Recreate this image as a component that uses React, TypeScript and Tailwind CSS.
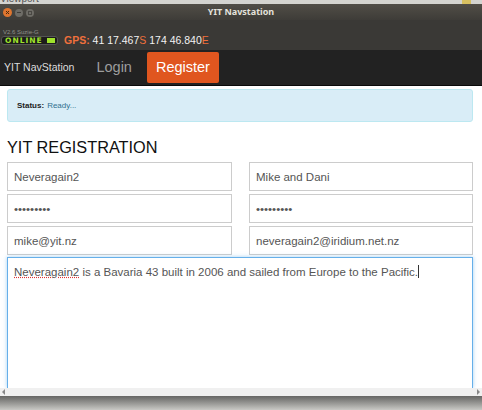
const field = "w-full h-full border border-[#ccc] bg-white px-[6px] text-[11.5px] text-[#555] outline-none font-['Liberation_Sans',sans-serif]";

function Field({ value, type = "text" }: { value: string; type?: string }) {
  return (
    <div className="h-[29px]">
      <input className={field} type={type} value={value} readOnly />
    </div>
  );
}

export default function App() {
  return (
    <div className="w-[482px] h-[410px] overflow-hidden flex flex-col bg-[#c9c9c5] font-['Liberation_Sans',sans-serif]">
      <div className="h-[4px] bg-[#d4d4d0] overflow-hidden flex items-start pr-[11px]">
        <span className="-mt-[7px] text-[10px] leading-[12px] text-[#555]">Viewport</span>
        <div className="ml-auto w-[9px] h-[4px] bg-[#d8c060]" />
      </div>
      <div className="h-[16px] flex items-center relative bg-gradient-to-b from-[#514e47] to-[#3e3c38]">
        <div className="flex items-center gap-[3px] pl-[3px] pt-[1px]">
          <div className="w-[9px] h-[9px] rounded-full bg-[#e0762f] flex items-center justify-center">
            <svg width="5" height="5" viewBox="0 0 5 5"><path d="M1 1L4 4M4 1L1 4" stroke="#4a2a10" strokeWidth="1" /></svg>
          </div>
          <div className="w-[8px] h-[8px] rounded-full bg-[#6e6c66] flex items-center justify-center">
            <div className="w-[4px] h-[1px] bg-[#3e3c38]" />
          </div>
          <div className="w-[8px] h-[8px] rounded-full bg-[#6e6c66] flex items-center justify-center">
            <div className="w-[4px] h-[4px] border border-[#4a4843]" />
          </div>
        </div>
        <div className="absolute inset-0 flex items-center justify-center text-[9px] leading-[16px] font-bold text-[#e4e2dc] font-['Noto_Sans',sans-serif]">YIT Navstation</div>
      </div>
      <div className="h-[30px] bg-[#3a3936] flex items-end pb-[4px] pl-[1px]">
        <div className="w-[57px] flex flex-col mb-[1px]">
          <span className="text-[6px] leading-[6px] text-[#8f8f8a] pl-[2px] mb-[1px] whitespace-nowrap">V2.6 Suzie-G</span>
          <div className="h-[9px] w-[57px] rounded-[3px] bg-[#1c1c1a] border border-[#555] flex items-center justify-between pl-[3px] pr-[2px]">
            <span className="text-[7.5px] leading-[8px] font-bold tracking-[1px] text-[#9fe22c] font-['DejaVu_Sans',sans-serif]">ONLINE</span>
            <div className="w-[8px] h-[5px] bg-[#9fe22c]" />
          </div>
        </div>
        <div className="ml-[6px] text-[10.5px] leading-[12px] text-[#f2f2f2]">
          <span className="text-[#f0703c] font-bold">GPS:</span> 41 17.467<span className="text-[#f0703c]">S</span> 174 46.840<span className="text-[#f0703c]">E</span>
        </div>
      </div>
      <div className="h-[36px] bg-[#222] flex items-center border-b border-[#0a0a0a]">
        <span className="ml-[4px] text-[10.5px] text-[#ddd]">YIT NavStation</span>
        <span className="ml-[22px] text-[14.5px] text-[#9d9d9d]">Login</span>
        <span className="ml-[15px] h-[31px] w-[72px] rounded-[2px] bg-[#e0561f] text-white text-[14.5px] flex items-center justify-center">Register</span>
      </div>
      <div className="h-[302px] bg-white pl-[7px] pr-[9px] pt-[3px] flex flex-col">
        <div className="h-[33px] bg-[#d9edf7] border border-[#bce8f1] rounded-[3px] flex items-center pl-[9px] text-[8px] text-[#31708f]">
          <b className="text-[#222] mr-[3px]">Status:</b> Ready...
        </div>
        <h1 className="mt-[15px] text-[16.3px] leading-[20px] text-[#111] font-normal">YIT REGISTRATION</h1>
        <div className="mt-[5px] grid grid-cols-[225px_224px] gap-x-[17px] gap-y-[3px]">
          <Field value="Neveragain2" />
          <Field value="Mike and Dani" />
          <Field value="aaaaaaaaa" type="password" />
          <Field value="aaaaaaaaa" type="password" />
          <Field value="mike@yit.nz" />
          <Field value="neveragain2@iridium.net.nz" />
        </div>
        <div className="mt-[2px] flex-1 border border-[#66afe9] border-b-0 shadow-[0_0_4px_rgba(102,175,233,0.6)] px-[6px] pt-[6px] text-[11.5px] leading-[16px] text-[#555]">
          <span className="underline decoration-dotted decoration-[#d33]">Neveragain2</span> is a Bavaria 43 built in 2006 and sailed from Europe to the Pacific.<span className="inline-block w-[1px] h-[13px] bg-[#333] align-[-2px]" />
        </div>
      </div>
      <div className="h-[8px] bg-[#f0f0f0] flex items-center justify-between px-[2px]">
        <div className="w-0 h-0 border-y-[3px] border-y-transparent border-r-[3px] border-r-[#888]" />
        <div className="w-0 h-0 border-y-[3px] border-y-transparent border-l-[3px] border-l-[#888]" />
      </div>
      <div className="flex-1 bg-gradient-to-b from-[#666664] to-[#c9c9c5]" />
    </div>
  );
}
